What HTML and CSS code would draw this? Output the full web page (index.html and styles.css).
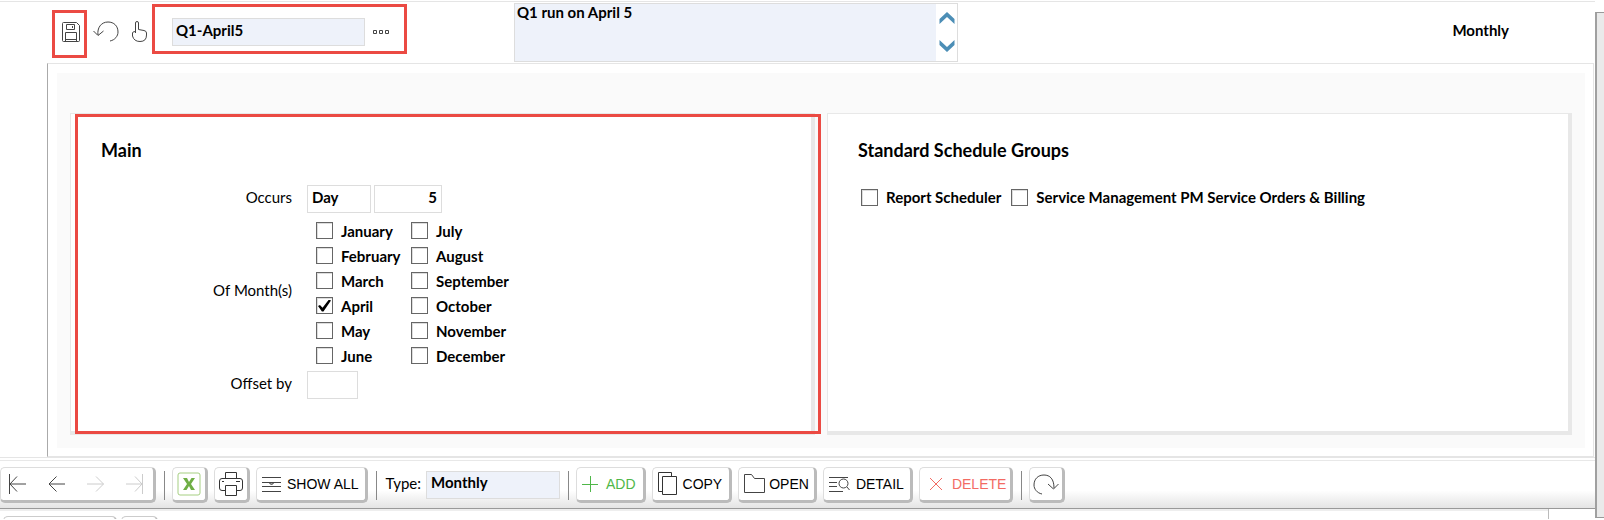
FILE: index.html
```html
<!DOCTYPE html>
<html lang="en">
<head>
<meta charset="utf-8">
<title>Schedule Q1-April5</title>
<link rel="stylesheet" href="styles.css">
</head>
<body>
<div class="page">
  <div class="workspace">
    <header class="topbar">
      <div class="tools">
        <button class="icon-button marked" type="button" aria-label="Save">
          <svg width="18" height="20" viewBox="0 0 18 20" fill="none" stroke="#444"><path d="M.5 1.5Q.5.5 1.500.5H14.500L17.500 3.500V18.500Q17.500 19.500 16.500 19.500H1.500Q.5 19.500.5 18.500Z"/><path d="M4.500 2.500H12.500V7.500H4.500ZM10.500 4V6M3.500 19V10.500H14.500V19M3.500 17.500H14.500"/></svg>
          <span class="marker marker-save"></span>
        </button>
        <button class="icon-button" type="button" aria-label="Undo">
          <svg width="26" height="21" viewBox="0 0 26 21" fill="none" stroke="#444"><path d="M5 14C4 7 8 1 15 1C21 1 25 5 25 11C25 15 22 19 17 20M.5 10L5 14.500L10.500 10"/></svg>
        </button>
        <button class="icon-button" type="button" aria-label="Select">
          <svg width="15" height="21" viewBox="0 0 15 21" fill="none" stroke="#444"><path d="M3.500 12V2Q3.500.5 5 .5Q6.500.5 6.500 2V8.500L12 9.500Q14.500 10 14.500 12V14Q14.500 20.500 8 20.500Q2 20.500.5 15V12Q.5 10.500 3.500 10.500"/></svg>
        </button>
      </div>
      <div class="schedule marked">
        <input class="field tinted schedule-name" type="text" value="Q1-April5" aria-label="Schedule name">
        <button class="icon-button" type="button" aria-label="Browse">
          <svg width="18" height="6" viewBox="0 0 18 6" fill="none" stroke="#444"><path d="M1.500 1.500H4.500V4.500H1.500ZM7.500 1.500H10.500V4.500H7.500ZM13.500 1.500H16.500V4.500H13.500Z"/></svg>
        </button>
        <span class="marker marker-name"></span>
      </div>
      <div class="description">
        <textarea class="description-text" aria-label="Description">Q1 run on April 5</textarea>
        <div class="scroller">
          <button class="icon-button" type="button" aria-label="Scroll up"><svg width="16" height="12" viewBox="0 0 16 12"><path d="M8 0L15.500 7V12L8 5L.5 12V7Z" fill="#4c8eb6"/></svg></button>
          <button class="icon-button" type="button" aria-label="Scroll down"><svg width="16" height="12" viewBox="0 0 16 12"><path d="M8 12L15.500 5V0L8 7L.5 0V5Z" fill="#4c8eb6"/></svg></button>
        </div>
      </div>
      <strong class="frequency">Monthly</strong>
    </header>

    <main class="content">
      <div class="panels">
        <section class="panel marked">
          <h2 class="panel-title">Main</h2>
          <div class="form">
            <label class="form-label" for="occurs">Occurs</label>
            <div class="occurs">
              <input class="field occurs-unit" id="occurs" type="text" value="Day">
              <input class="field occurs-number" type="text" value="5" aria-label="Day number">
            </div>
            <span class="form-label months-label" id="months">Of Month(s)</span>
            <div class="months" role="group" aria-labelledby="months">
              <label class="check"><input type="checkbox">January</label>
              <label class="check"><input type="checkbox">February</label>
              <label class="check"><input type="checkbox">March</label>
              <label class="check"><input type="checkbox" checked>April</label>
              <label class="check"><input type="checkbox">May</label>
              <label class="check"><input type="checkbox">June</label>
              <label class="check"><input type="checkbox">July</label>
              <label class="check"><input type="checkbox">August</label>
              <label class="check"><input type="checkbox">September</label>
              <label class="check"><input type="checkbox">October</label>
              <label class="check"><input type="checkbox">November</label>
              <label class="check"><input type="checkbox">December</label>
            </div>
            <label class="form-label" for="offset">Offset by</label>
            <input class="field offset" id="offset" type="text">
          </div>
          <span class="marker marker-panel"></span>
        </section>
        <section class="panel">
          <h2 class="panel-title">Standard Schedule Groups</h2>
          <div class="groups">
            <label class="check"><input type="checkbox">Report Scheduler</label>
            <label class="check"><input type="checkbox">Service Management PM Service Orders &amp; Billing</label>
          </div>
        </section>
      </div>
    </main>

    <nav class="actions">
      <div class="button-box pager">
        <button class="icon-button" type="button" aria-label="First"><svg width="17" height="20" viewBox="0 0 17 20" fill="none" stroke="#444"><path d="M.5 0V20M17 10H1M8 2.500L1 10L8 17.500"/></svg></button>
        <button class="icon-button" type="button" aria-label="Previous"><svg width="17" height="20" viewBox="0 0 17 20" fill="none" stroke="#444"><path d="M17 10H1M8.500 2.500L1 10L8.500 17.500"/></svg></button>
        <button class="icon-button" type="button" aria-label="Next" disabled><svg width="17" height="20" viewBox="0 0 17 20" fill="none" stroke="#ccc"><path d="M0 10H16.500M9 2.500L16.500 10L9 17.500"/></svg></button>
        <button class="icon-button" type="button" aria-label="Last" disabled><svg width="17" height="20" viewBox="0 0 17 20" fill="none" stroke="#ccc"><path d="M16.500 0V20M0 10H16M9 2.500L16 10L9 17.500"/></svg></button>
      </div>
      <span class="divider"></span>
      <button class="button-box square" type="button" aria-label="Export to Excel">
        <svg width="24" height="24" viewBox="0 0 24 24" fill="none"><rect x="1" y="1" width="22" height="22" rx="2" stroke="#a6cf82"/><path d="M6 6H10L12 10L14.500 6H18L14 12L18 18H14L12 14L9.500 18H6L10 12Z" fill="#6fae45"/></svg>
      </button>
      <button class="button-box square" type="button" aria-label="Print">
        <svg width="24" height="24" viewBox="0 0 24 24" fill="none" stroke="#333"><path d="M6.500 6V.5H17.500V6M6.500 18.500H3Q.5 18.500.5 16V9Q.5 6.500 3 6.500H21Q23.500 6.500 23.500 9V16Q23.500 18.500 21 18.500H17.500M6.500 13.500H17.500V23.500H6.500ZM3 9.500H5M17 9.500H21"/></svg>
      </button>
      <button class="button-box show-all" type="button">
        <svg width="19" height="16" viewBox="0 0 19 16" fill="none" stroke="#444"><path d="M0 1.500H19M0 6.500H19M0 10.500H19M0 15.500H19M7.500 7L9.500 9L11.500 7Z"/></svg>SHOW ALL
      </button>
      <span class="divider"></span>
      <div class="type">
        <label class="type-label" for="type">Type:</label>
        <input class="field tinted type-field" id="type" type="text" value="Monthly">
      </div>
      <span class="divider"></span>
      <button class="button-box add" type="button">
        <svg width="16" height="16" viewBox="0 0 16 16" fill="none" stroke="#4fb749"><path d="M8.500 0V16M0 8.500H16"/></svg>ADD
      </button>
      <button class="button-box" type="button">
        <svg width="19" height="23" viewBox="0 0 19 23" fill="none" stroke="#333"><path d="M4 19.500H.5V.5H13.500V4M4.500 4.500H18.500V22.500H4.500Z"/></svg>COPY
      </button>
      <button class="button-box open" type="button">
        <svg width="21" height="19" viewBox="0 0 21 19" fill="none" stroke="#444"><path d="M.5.5H7.500L10.500 4.500H20.500V18.500H.5Z"/></svg>OPEN
      </button>
      <button class="button-box detail" type="button">
        <svg width="21" height="16" viewBox="0 0 21 16" fill="none" stroke="#444"><path d="M0 1.500H19M0 6.500H8M0 10.500H8M0 15.500H14M18 11L20.500 14"/><circle cx="14.500" cy="7.500" r="4.500"/></svg>DETAIL
      </button>
      <button class="button-box delete" type="button">
        <svg width="14" height="14" viewBox="0 0 14 14" fill="none" stroke="#f36b63"><path d="M1 1L13 13M13 1L1 13"/></svg>DELETE
      </button>
      <span class="divider"></span>
      <button class="button-box square" type="button" aria-label="Refresh">
        <svg width="26" height="21" viewBox="0 0 26 21" fill="none" stroke="#444"><path d="M9 20C4 19 1 15 1 11C1 5 5 1 11 1C17 1 21 5 21 14M15 10L20.500 15L25.500 10"/></svg>
      </button>
    </nav>

    <footer class="tabs">
      <span class="tab tab-wide"></span>
      <span class="tab"></span>
      <span class="tabs-end"></span>
    </footer>
  </div>
  <div class="side"></div>
</div>
</body>
</html>
```
FILE: styles.css
```css
* { box-sizing: border-box; }

body {
  margin: 0;
  background: #fff;
  color: #000;
  font: 15px/18px Lato, "Open Sans", sans-serif;
}

button, input, textarea { font: inherit; color: inherit; margin: 0; }
svg { display: block; flex: none; }

.page { display: flex; }
.workspace { flex: 1; min-width: 0; }

.side {
  width: 9px;
  margin: 12px 0 1px;
  background: #eaeaea;
  border: 1px solid #999;
  border-left: 2px solid #a0a0a0;
  border-right: 0;
}

.icon-button { display: block; padding: 0; border: 0; background: none; }

.field {
  height: 28px;
  padding: 0 4px 4px;
  border: 1px solid #ddd;
  border-radius: 0;
  background: #fff;
  font-weight: 700;
}
.tinted { background: #eef2fa; }

/* Red call-out frames drawn over the interface */
.marked { position: relative; }
.marker { position: absolute; border: 3px solid #eb4a43; pointer-events: none; }
.marker-save { inset: -11px -7px -16px -10px; }
.marker-name { inset: -14px -17px -8px -20px; }
.marker-panel { inset: 0 -10px -3px 4px; }

.topbar {
  display: flex;
  align-items: flex-start;
  height: 63px;
  margin-top: 1px;
  border-top: 1px solid #e5e5e5;
}
.tools { display: flex; gap: 13px; padding: 19px 0 0 62px; }
.schedule { display: flex; align-items: center; gap: 7px; margin: 16px 0 0 25px; }
.schedule-name { width: 193px; padding-left: 3px; }

.description {
  display: flex;
  width: 444px;
  height: 59px;
  margin: 1px 0 0 124px;
  border: 1px solid #ddd;
}
.description-text {
  flex: 1;
  padding: 0 2px;
  border: 0;
  background: #eef2fa;
  font-weight: 700;
  line-height: 16px;
  resize: none;
  overflow: hidden;
}
.scroller {
  display: flex;
  flex-direction: column;
  justify-content: space-between;
  padding: 8px 2px 9px 3px;
}
.frequency { margin: 19px 86px 0 auto; }

.content {
  margin: -1px 1px 0 47px;
  padding: 9px 8px 8px 9px;
  border: 1px solid #e5e5e5;
  border-left-color: #aaa;
}
.panels {
  display: grid;
  grid-template-columns: 1fr 1fr;
  gap: 12px;
  padding: 40px 13px 13px;
  background: #fafafa;
}
.panel {
  padding: 25px 30px 32px;
  border: 1px solid #e8e8e8;
  border-right-width: 4px;
  border-bottom-width: 4px;
  background: #fff;
}
.panel-title { margin: 0 0 24px; font-size: 18px; line-height: 22px; font-weight: 700; }

.form {
  display: grid;
  grid-template-columns: 191px 1fr;
  column-gap: 15px;
}
.form-label { padding-top: 3px; text-align: right; }
.months-label { align-self: center; padding: 0 0 5px; }
.occurs { display: flex; gap: 3px; }
.occurs-unit { width: 64px; }
.occurs-number { width: 68px; text-align: right; }
.months {
  display: grid;
  grid-template: repeat(6, 25px) / repeat(2, 95px);
  grid-auto-flow: column;
  padding: 5px 0 3px 9px;
}
.offset { width: 51px; }

.check { display: flex; align-items: center; gap: 8px; font-weight: 700; white-space: nowrap; }
.check input {
  display: grid;
  place-content: center;
  flex: none;
  appearance: none;
  width: 17px;
  height: 17px;
  border: 1px solid #666;
  box-shadow: inset 1px 1px #ddd;
}
.check input:checked::before {
  content: "";
  width: 13px;
  height: 12px;
  background: #000;
  clip-path: polygon(0 55%, 15% 45%, 35% 68%, 84% 0, 100% 8%, 42% 100%, 30% 100%);
}
.groups { display: flex; gap: 10px; padding: 3px 0 0 3px; }

.actions {
  display: flex;
  align-items: center;
  height: 52px;
  padding-top: 4px;
  border-top: 1px solid #e5e5e5;
  border-bottom: 1px solid #999;
  background: linear-gradient(#fff 0 65%, #e4e4e4);
  box-shadow: inset 0 2px #fff, inset 0 3px #e8e8e8;
  font: 14px/18px "Liberation Sans", Arial, sans-serif;
}
.button-box {
  display: flex;
  align-items: center;
  gap: 6px;
  height: 36px;
  margin-right: 6px;
  padding: 0 7px 1px 5px;
  border: 1px solid #ddd;
  border-right: 3px solid #bbb;
  border-bottom: 3px solid #bbb;
  border-radius: 5px;
  background: #fff;
  white-space: nowrap;
}
.square { justify-content: center; width: 36px; padding: 0; }
.pager { width: 156px; gap: 22px; padding: 0 8px; }
.divider { width: 1px; height: 29px; margin: 0 7px 0 2px; background: #888; }
.type { display: flex; align-items: center; margin-right: 6px; font: 15px/18px Lato, sans-serif; }
.type-label { padding: 0 0 4px 2px; }
.type-field { width: 134px; margin-left: 5px; padding-bottom: 6px; }
.show-all, .detail { padding-right: 6px; }
.add { gap: 8px; color: #4fb749; }
.open { gap: 4px; padding-right: 5px; }
.delete { gap: 9px; padding-left: 9px; padding-right: 4px; color: #f36b63; }

.tabs {
  display: flex;
  height: 10px;
  gap: 4px;
  padding-left: 3px;
  overflow: hidden;
  box-shadow: inset 0 2px #eee;
}
.tab {
  width: 37px;
  height: 30px;
  margin-top: 7px;
  border: 1px solid #ccc;
  border-right: 2px solid #bbb;
  border-radius: 5px;
  flex: none;
}
.tab-wide { width: 114px; }
.tabs-end { width: 47px; margin-left: auto; border-left: 1px solid #bbb; background: #fff; }
```
